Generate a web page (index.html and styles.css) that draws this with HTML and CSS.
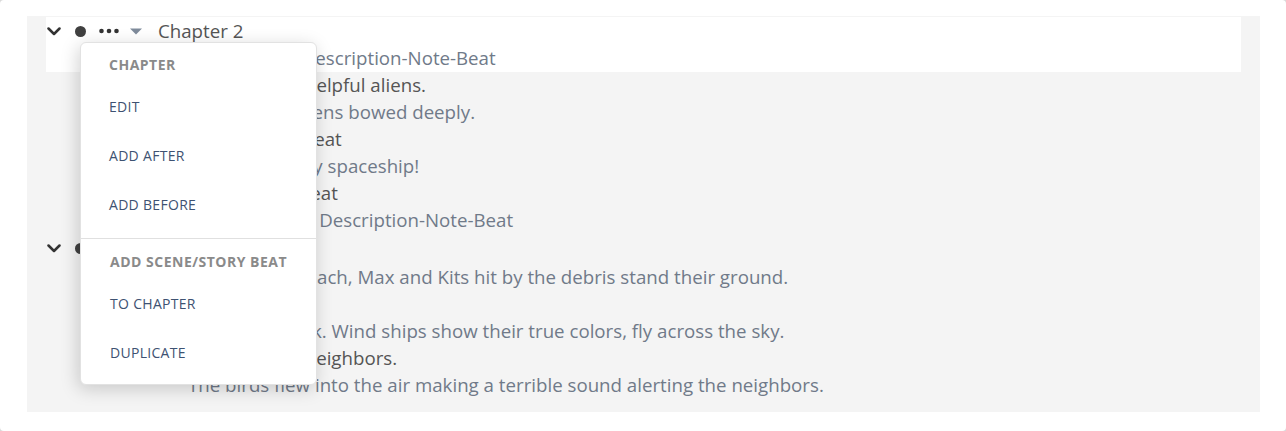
FILE: index.html
```html
<!DOCTYPE html>
<html>
<head>
<meta charset="utf-8">
<link rel="stylesheet" href="styles.css">
</head>
<body>
<div class="page">
  <div class="panel">
    <div class="chapter">
      <div class="chapter-top">
        <div class="chapter-head">
          <svg class="ic-chev" width="14" height="9" viewBox="0 0 14 9"><polyline points="1.5,1.5 7,7 12.5,1.5" fill="none" stroke="#333" stroke-width="2.5" stroke-linecap="round" stroke-linejoin="round"/></svg>
          <span class="ic-dot"></span>
          <svg class="ic-more" width="20" height="6" viewBox="0 0 20 6"><circle cx="2.5" cy="3" r="2.3" fill="#333"/><circle cx="10" cy="3" r="2.3" fill="#333"/><circle cx="17.5" cy="3" r="2.3" fill="#333"/></svg>
          <svg class="ic-caret" width="12" height="7" viewBox="0 0 12 7"><polygon points="0,0.5 12,0.5 6,6.5" fill="#7f8b9b"/></svg>
          <span class="chapter-title">Chapter 2</span>
        </div>
        <div class="line desc">Chapter 2 — Description-Note-Beat</div>
      </div>
      <div class="line title">Max and Kit met helpful aliens.</div>
      <div class="line desc">Greeting all aliens bowed deeply.</div>
      <div class="line title">An Arrival: Story Beat</div>
      <div class="line desc">Welcome to my spaceship!</div>
      <div class="line title">Welcome: Story Beat</div>
      <div class="line desc">Chapter Scene Description-Note-Beat</div>
    </div>
    <div class="chapter">
      <div class="chapter-head second">
        <svg class="ic-chev" width="14" height="9" viewBox="0 0 14 9"><polyline points="1.5,1.5 7,7 12.5,1.5" fill="none" stroke="#333" stroke-width="2.5" stroke-linecap="round" stroke-linejoin="round"/></svg>
        <span class="ic-dot"></span>
        <svg class="ic-more" width="20" height="6" viewBox="0 0 20 6"><circle cx="2.5" cy="3" r="2.3" fill="#333"/><circle cx="10" cy="3" r="2.3" fill="#333"/><circle cx="17.5" cy="3" r="2.3" fill="#333"/></svg>
        <svg class="ic-caret" width="12" height="7" viewBox="0 0 12 7"><polygon points="0,0.5 12,0.5 6,6.5" fill="#7f8b9b"/></svg>
        <span class="chapter-title">Chapter 3</span>
      </div>
      <div class="line desc">Back on the beach, Max and Kits hit by the debris stand their ground.</div>
      <div class="line title">Storm Beat</div>
      <div class="line desc">The sky is black. Wind ships show their true colors, fly across the sky.</div>
      <div class="line title">Birds told all the neighbors.</div>
      <div class="line desc">The birds flew into the air making a terrible sound alerting the neighbors.</div>
    </div>

    <div class="menu">
      <div class="menu-section">
        <div class="menu-header">CHAPTER</div>
        <div class="menu-item">EDIT</div>
        <div class="menu-item">ADD AFTER</div>
        <div class="menu-item">ADD BEFORE</div>
      </div>
      <div class="menu-section second">
        <div class="menu-header">ADD SCENE/STORY BEAT</div>
        <div class="menu-item">TO CHAPTER</div>
        <div class="menu-item">DUPLICATE</div>
      </div>
    </div>
  </div>
</div>
</body>
</html>
```
FILE: styles.css
```css
html, body {
  margin: 0;
  padding: 0;
}
html {
  background: #d9d9d9;
}
body {
  font-family: "Open Sans", "Liberation Sans", sans-serif;
  background: #d9d9d9;
}
.page {
  height: 431px;
  box-sizing: border-box;
  background: #ffffff;
  border-radius: 4px;
  padding: 16px 0 0 27px;
}
.panel {
  position: relative;
  width: 1233px;
  height: 396px;
  box-sizing: border-box;
  background: #f4f4f4;
  padding: 1px 19px 0 19px;
}
.chapter-top {
  background: #ffffff;
}
.chapter-head {
  display: flex;
  align-items: center;
  height: 28px;
}
.chapter-head.second {
  height: 30px;
  padding-bottom: 2px;
  box-sizing: border-box;
}
.ic-chev {
  margin-left: 1px;
  flex: none;
}
.ic-dot {
  flex: none;
  width: 11px;
  height: 11px;
  border-radius: 50%;
  background: #404040;
  margin-left: 14px;
}
.ic-more {
  flex: none;
  margin-left: 13px;
}
.ic-caret {
  flex: none;
  margin-left: 11px;
}
.chapter-title {
  margin-left: 16px;
  font-size: 18.7px;
  line-height: 27px;
  padding-bottom: 2px;
  color: #555555;
}
.line {
  height: 27px;
  box-sizing: border-box;
  line-height: 25px;
  padding-bottom: 2px;
  font-size: 18.7px;
  white-space: nowrap;
}
.line.title {
  color: #555555;
  padding-left: 112px;
}
.line.desc {
  color: #707a89;
  padding-left: 142px;
}
.menu {
  position: absolute;
  left: 53px;
  top: 26px;
  width: 237px;
  box-sizing: border-box;
  background: #ffffff;
  border: 1px solid #e2e2e2;
  border-radius: 6px;
  box-shadow: -2px 4px 18px rgba(0, 0, 0, 0.18);
}
.menu-section {
  padding: 0 0 9px 0;
}
.menu-section.second {
  border-top: 1px solid #e0e0e0;
  padding-bottom: 7px;
}
.menu-header {
  padding: 12px 0 7px 28px;
  line-height: 20px;
  font-size: 14px;
  font-weight: 700;
  color: #8a8a8a;
  letter-spacing: 0.5px;
}
.menu-section.second .menu-header {
  padding: 13px 0 7px 29px;
}
.menu-item {
  height: 49px;
  line-height: 49px;
  padding-left: 28px;
  font-size: 14px;
  color: #3e5272;
  letter-spacing: 0.3px;
}
.menu-section.second .menu-item {
  padding-left: 29px;
}
```
